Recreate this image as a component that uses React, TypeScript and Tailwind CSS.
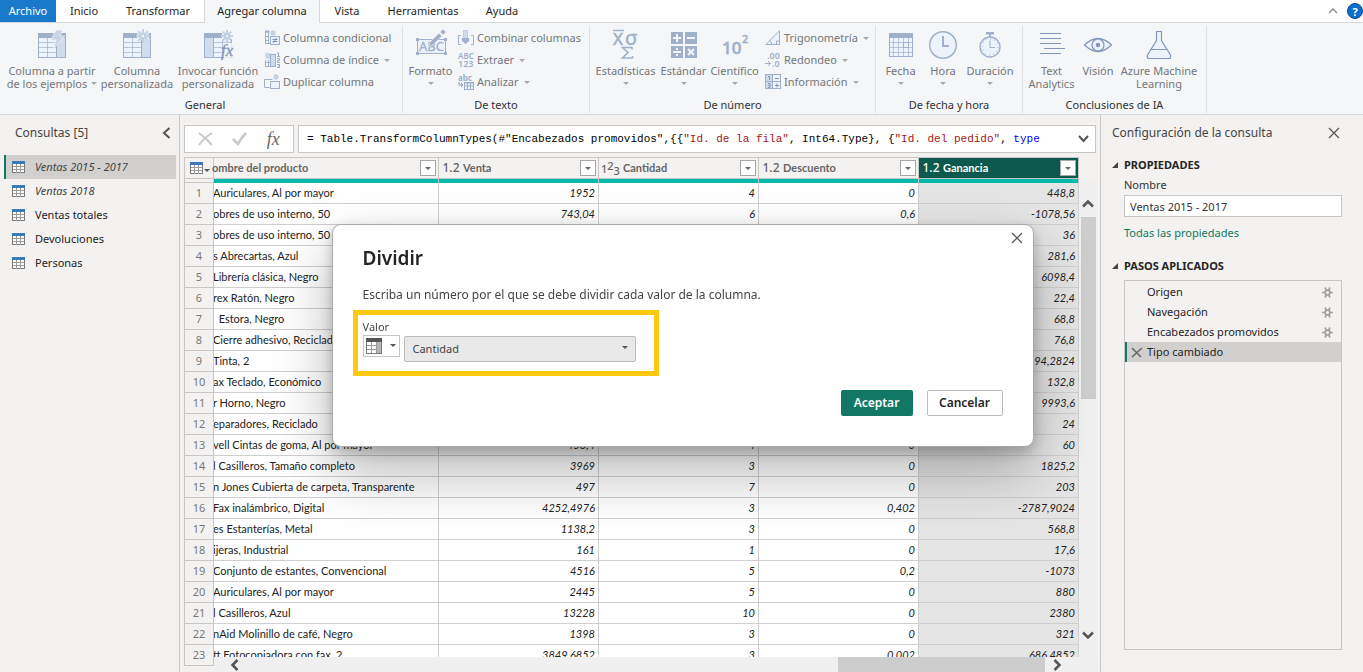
import React from "react";

/* ---------- ribbon icons ---------- */

const LINE = "#a0b0cb";
const DARK = "#8496b8";
const FILL = "#ecf3fd";
const SIDE = "#d0dbec";

function Svg({ w = 32, h = 32, children }: { w?: number; h?: number; children: React.ReactNode }) {
  return (
    <svg width={w} height={h} viewBox={`0 0 ${w} ${h}`} fill="none" className="shrink-0" aria-hidden="true">
      {children}
    </svg>
  );
}

function Spark({ x, y, r, c = "#c3cfe2" }: { x: number; y: number; r: number; c?: string }) {
  const d = Math.round(r * 7) / 10;
  return (
    <g stroke={c} strokeWidth={r > 4 ? 2 : 1.2}>
      <path d={`M${x - r} ${y}H${x + r}M${x} ${y - r}V${y + r}M${x - d} ${y - d}L${x + d} ${y + d}M${x - d} ${y + d}L${x + d} ${y - d}`} />
      <circle cx={x} cy={y} r={r / 3} fill="#f4f6f8" />
    </g>
  );
}

function TableBase({ side }: { side: "left" | "right" }) {
  const sx = side === "right" ? 20.5 : 2.5;
  return (
    <g>
      <rect x="2.5" y="4.5" width="27" height="24" fill={FILL} stroke={LINE} />
      <path d="M2 13.5h28M2 18.5h28M2 23.5h28" stroke={LINE} strokeOpacity=".7" />
      <path d={side === "right" ? "M11.5 9v19" : "M20.5 9v19"} stroke={LINE} strokeOpacity=".7" />
      <rect x={sx} y="8.5" width="9" height="20" fill={SIDE} stroke={LINE} />
      <rect x="2" y="4" width="28" height="5" fill={LINE} />
    </g>
  );
}

const IcoExamples = () => (
  <Svg>
    <TableBase side="right" />
    <path d="M20 1h7l-3 6h5L17 20l3-9h-5z" fill="#c9d4e6" stroke="#f4f6f8" strokeWidth="0.7" />
  </Svg>
);
const IcoCustom = () => (
  <Svg>
    <TableBase side="right" />
    <rect x="16" y="3" width="12" height="8" fill="#f4f6f8" opacity=".7" />
    <Spark x={22} y={7} r={7} />
  </Svg>
);
const IcoInvoke = () => (
  <Svg>
    <TableBase side="left" />
    <rect x="20" y="1" width="12" height="9" fill="#f4f6f8" />
    <rect x="22" y="14" width="10" height="17" fill="#f4f6f8" opacity=".8" />
    <Spark x={25} y={7} r={6} />
    <text x="19" y="27" fontSize="17" fontStyle="italic" fontFamily="Liberation Serif, serif" fill={DARK} stroke={DARK} strokeWidth="0.3">fx</text>
  </Svg>
);
const IcoConditional = () => (
  <Svg w={16} h={16}>
    <path d="M1 2h5M1.5 2v12M1 13.5h5M1 6.5h4M1 10.5h4M4.5 3v10" stroke={LINE} />
    <path d="M1 1.5h4" stroke={LINE} strokeWidth="2" />
    <Spark x={9} y={3} r={3} />
    <rect x="6.5" y="6.5" width="9" height="8" fill={FILL} stroke={LINE} />
    <path d="M8.5 9.5h5M8.5 11.500h5M12.500 8l-3 5" stroke={DARK} />
  </Svg>
);
const IcoIndex = () => (
  <Svg w={16} h={16}>
    <Spark x={4} y={4} r={3.5} />
    <path d="M1.5 8v6.500h6M1 10.500h6M4.500 8v6M7 2.500h5" stroke={LINE} />
    <rect x="6.5" y="2.500" width="5" height="12" fill={SIDE} stroke={LINE} />
    <path d="M13 1h1.500v3M13 4.500h3M13 6.500h2.500v2h-2v2h2.500M13 12.500h2.500v3H13M14 14h1" stroke={DARK} strokeWidth=".8" />
  </Svg>
);
const IcoDuplicate = () => (
  <Svg w={16} h={16}>
    <path d="M5.500 13.500h-5v-8h8" stroke={LINE} />
    <Spark x={12} y={3} r={3} />
    <rect x="6.500" y="7.500" width="9" height="7" fill={FILL} stroke={LINE} />
  </Svg>
);
const IcoFormat = () => (
  <Svg>
    <rect x="2.500" y="10.500" width="28" height="14" fill={FILL} stroke={LINE} />
    <path d="M1 9h3v3H1zM29 9h3v3h-3zM1 23h3v3H1zM29 23h3v3h-3z" fill={LINE} />
    <text x="4" y="22" fontSize="13" fontFamily="Noto Sans, sans-serif" fill={LINE} stroke={LINE} strokeWidth=".3">ABC</text>
    <path d="M28 0l3 3-3 3-3-3zM24 4l3 3-9 9-5 2 2-5z" fill={LINE} stroke="#f4f6f8" strokeWidth="0.6" />
  </Svg>
);
const IcoMerge = () => (
  <Svg w={16} h={16}>
    <rect x="5.500" y="0.500" width="4" height="8" fill={SIDE} stroke={LINE} strokeOpacity=".5" />
    <path d="M4 8h7v3l-3.500 3L4 11z" fill={LINE} />
    <path d="M3 5.500H.500v9H3M13 5.500h2.500v9H13" stroke={LINE} />
  </Svg>
);
const IcoExtract = () => (
  <Svg w={16} h={16}>
    <text x="0" y="7" fontSize="8" fontWeight="600" fontFamily="Noto Sans, sans-serif" fill={LINE}>ABC</text>
    <text x="0" y="15" fontSize="9" fontWeight="600" fontFamily="Noto Sans, sans-serif" fill={LINE}>123</text>
  </Svg>
);
const IcoParse = () => (
  <Svg w={16} h={16}>
    <text x="0" y="7" fontSize="8" fontWeight="700" fontFamily="Noto Sans, sans-serif" fill={LINE}>abc</text>
    <rect x="6.500" y="8.500" width="9" height="7" fill={FILL} stroke={LINE} />
    <path d="M6 9h10M7 12h8M9.500 9v6M12.500 9v6" stroke={LINE} />
    <path d="M1 8v3h4M3 9l2 2-2 2" stroke={DARK} />
  </Svg>
);
const IcoStats = () => (
  <Svg>
    <text x="3" y="16" fontSize="17" fontFamily="Noto Sans, sans-serif" fill={LINE} stroke={LINE} strokeWidth=".5">X</text>
    <text x="15" y="16" fontSize="20" fontFamily="Noto Sans, sans-serif" fill={LINE} stroke={LINE} strokeWidth=".4">σ</text>
    <path d="M3 1.500h11" stroke={LINE} strokeWidth="1.500" />
    <path d="M22 20.500v-2H12.500l5.500 5-5.500 5.500h10v-2" stroke={LINE} strokeWidth="1.600" />
  </Svg>
);
const IcoStandard = () => (
  <Svg>
    <path d="M3 3h12v12H3zM17 3h12v12H17zM3 17h12v12H3zM17 17h12v12H17z" fill={LINE} />
    <path d="M5 9h8M9 5v8M19 9h8M5 23h8M20 20l6 6M26 20l-6 6" stroke="#f4f6f8" strokeWidth="2" />
    <path d="M8 19h2v2H8zM8 25h2v2H8z" fill="#f4f6f8" />
  </Svg>
);
const IcoScientific = () => (
  <Svg>
    <text x="3" y="25" fontSize="17" fontWeight="500" fontFamily="Noto Sans, sans-serif" fill={LINE} stroke={LINE} strokeWidth=".6">10</text>
    <text x="23" y="14" fontSize="11" fontWeight="500" fontFamily="Noto Sans, sans-serif" fill={LINE} stroke={LINE} strokeWidth=".4">2</text>
  </Svg>
);
const IcoTrig = () => (
  <Svg w={16} h={16}>
    <path d="M.800 14.500H14.500V.800z" fill={FILL} stroke={LINE} />
    <path d="M11.500 14v-3h3M5 11q2 1 1.500 3" stroke={LINE} />
  </Svg>
);
const IcoRound = () => (
  <Svg w={16} h={16}>
    <text x="2" y="7" fontSize="9" fontWeight="600" fontFamily="Noto Sans, sans-serif" fill={LINE}>.00</text>
    <text x="7" y="15" fontSize="9" fontWeight="600" fontFamily="Noto Sans, sans-serif" fill={LINE}>.0</text>
    <path d="M0 11.500h5M3 9l2.500 2.500L3 14" stroke={LINE} />
  </Svg>
);
const IcoInfo = () => (
  <Svg w={16} h={16}>
    <rect x=".500" y=".500" width="15" height="14" fill={FILL} stroke={LINE} />
    <rect x="1" y="1" width="6" height="13" fill={SIDE} />
    <path d="M7.500 0v15M1 7.500h15" stroke={LINE} />
    <path d="M3 2.500h1.500V6M3 9.500h2v2H3.500h1.500v2H3M10 4.500h4M10 11.500h4M12 9.500v4" stroke={DARK} />
  </Svg>
);
const IcoDate = () => (
  <Svg>
    <rect x="4.500" y="5.500" width="23" height="22" fill={FILL} stroke={LINE} />
    <path d="M8.500 9v19M13.500 9v19M18.500 9v19M23.500 9v19M4 13.500h24M4 18.500h24M4 23.500h24" stroke={LINE} strokeOpacity=".7" />
    <rect x="18.500" y="13.500" width="5" height="5" stroke={LINE} />
    <path d="M4 4h24v5H4z" fill={LINE} />
  </Svg>
);
const IcoTime = () => (
  <Svg>
    <circle cx="16" cy="16" r="13.300" fill={FILL} stroke={LINE} strokeWidth="1.500" />
    <path d="M16 7v10h6" stroke={LINE} strokeWidth="2" />
  </Svg>
);
const IcoDuration = () => (
  <Svg>
    <path d="M12 3h8v2.500h-8zM15 5h2v4h-2z" fill={LINE} />
    <circle cx="16" cy="18" r="10" fill={FILL} stroke={LINE} strokeWidth="1.400" />
    <circle cx="16" cy="18" r="8" stroke={LINE} strokeDasharray="1 3.190" />
    <path d="M16 11.500v7h5" stroke={LINE} />
  </Svg>
);
const IcoText = () => (
  <Svg>
    <path d="M4 4.500h21M4 9.500h21M4 14.500h21M8 19.500h21M4 24.500h21" stroke={DARK} />
  </Svg>
);
const IcoVision = () => (
  <Svg>
    <path d="M2.500 16Q16 3 29.500 16 16 29 2.500 16z" fill={FILL} stroke={DARK} strokeWidth="1.200" />
    <circle cx="16" cy="16" r="6" fill={FILL} stroke={DARK} strokeWidth="1.200" />
    <circle cx="16" cy="16" r="2.200" fill={DARK} />
  </Svg>
);
const IcoAzure = () => (
  <Svg>
    <path d="M13 2.500h6M13.500 2.500v9L4.500 26q-1 3.500 2 3.500h19q3 0 2-3.500L18.500 11.500v-9" fill={FILL} stroke={DARK} strokeWidth="1.200" />
    <path d="M8 20.500h16" stroke={DARK} />
  </Svg>
);

/* ---------- ribbon ---------- */

function Caret({ className = "border-t-[#a9a9a9]" }: { className?: string }) {
  return <span className={`inline-block h-0 w-0 border-x-[3px] border-t-[3px] border-x-transparent ${className}`} />;
}

function BigButton({ icon, lines, width, caret }: { icon: React.ReactNode; lines: string[]; width: string; caret?: "inline" | "below" }) {
  return (
    <button type="button" className={`flex h-[68px] flex-col items-center pt-[2px] ${width}`}>
      <span className="mb-[3px] flex h-8 items-center">{icon}</span>
      {lines.map((l, i) => (
        <span key={l} className="flex items-center gap-1 whitespace-nowrap text-[11px] leading-[13px]">
          {l}
          {caret === "inline" && i === lines.length - 1 && <Caret />}
        </span>
      ))}
      {caret === "below" && (
        <span className="flex h-[13px] items-center">
          <Caret />
        </span>
      )}
    </button>
  );
}

function SmallButton({ icon, label, caret }: { icon: React.ReactNode; label: string; caret?: boolean }) {
  return (
    <button type="button" className="flex h-[22px] items-center gap-[3px] whitespace-nowrap text-[11px]">
      {icon}
      {label}
      {caret && <span className="ml-0.5 flex"><Caret /></span>}
    </button>
  );
}

function Group({ label, className, children }: { label: string; className: string; children: React.ReactNode }) {
  return (
    <section className={`flex shrink-0 flex-col border-r border-[#e0e1e4] ${className}`} aria-label={label}>
      <div className="flex h-[71px] pt-px">{children}</div>
      <div className="text-center text-[11px] leading-4 text-[#333]">{label}</div>
    </section>
  );
}

function Ribbon() {
  return (
    <div className="flex h-[92px] shrink-0 overflow-hidden border-b border-[#d5d7da] bg-[#f4f6f8] pt-[3px] pb-px text-[#75777a]">
      <Group label="General" className="w-[403px] pl-2">
        <BigButton icon={<IcoExamples />} lines={["Columna a partir", "de los ejemplos"]} width="w-[88px]" caret="inline" />
        <BigButton icon={<IcoCustom />} lines={["Columna", "personalizada"]} width="w-[82px]" />
        <BigButton icon={<IcoInvoke />} lines={["Invocar función", "personalizada"]} width="w-[80px]" />
        <div className="ml-1.5">
          <SmallButton icon={<IcoConditional />} label="Columna condicional" />
          <SmallButton icon={<IcoIndex />} label="Columna de índice" caret />
          <SmallButton icon={<IcoDuplicate />} label="Duplicar columna" />
        </div>
      </Group>
      <Group label="De texto" className="w-[187px]">
        <BigButton icon={<IcoFormat />} lines={["Formato"]} width="w-[55px]" caret="below" />
        <div>
          <SmallButton icon={<IcoMerge />} label="Combinar columnas" />
          <SmallButton icon={<IcoExtract />} label="Extraer" caret />
          <SmallButton icon={<IcoParse />} label="Analizar" caret />
        </div>
      </Group>
      <Group label="De número" className="w-[286px]">
        <BigButton icon={<IcoStats />} lines={["Estadísticas"]} width="w-[71px]" caret="below" />
        <BigButton icon={<IcoStandard />} lines={["Estándar"]} width="w-[45px]" caret="below" />
        <BigButton icon={<IcoScientific />} lines={["Científico"]} width="w-[57px]" caret="below" />
        <div className="ml-0.5">
          <SmallButton icon={<IcoTrig />} label="Trigonometría" caret />
          <SmallButton icon={<IcoRound />} label="Redondeo" caret />
          <SmallButton icon={<IcoInfo />} label="Información" caret />
        </div>
      </Group>
      <Group label="De fecha y hora" className="w-[147px]">
        <BigButton icon={<IcoDate />} lines={["Fecha"]} width="w-[49px]" caret="below" />
        <BigButton icon={<IcoTime />} lines={["Hora"]} width="w-[36px]" caret="below" />
        <BigButton icon={<IcoDuration />} lines={["Duración"]} width="w-[58px]" caret="below" />
      </Group>
      <Group label="Conclusiones de IA" className="w-[184px]">
        <BigButton icon={<IcoText />} lines={["Text", "Analytics"]} width="w-[57px]" />
        <BigButton icon={<IcoVision />} lines={["Visión"]} width="w-[36px]" />
        <BigButton icon={<IcoAzure />} lines={["Azure Machine", "Learning"]} width="w-[86px]" />
      </Group>
    </div>
  );
}

function Tabs() {
  const tab = "flex h-[22px] items-center text-[11px] text-[#262626]";
  return (
    <nav className="flex h-[23px] shrink-0 border-b border-[#d5d7da] bg-white" aria-label="Cinta de opciones">
      <button type="button" className="flex h-[22px] w-14 items-center justify-center bg-[#1979ca] text-[11px] text-white">Archivo</button>
      <button type="button" className={`${tab} w-14 justify-center`}>Inicio</button>
      <button type="button" className={`${tab} w-[92px] justify-center`}>Transformar</button>
      <button type="button" className="flex h-[23px] w-[116px] items-center justify-center border-x border-[#d5d7da] bg-[#f4f6f8] text-[11px] text-[#262626]">Agregar columna</button>
      <button type="button" className={`${tab} w-[54px] justify-center`}>Vista</button>
      <button type="button" className={`${tab} w-[98px] justify-center`}>Herramientas</button>
      <button type="button" className={`${tab} w-[60px] justify-center`}>Ayuda</button>
      <div className="ml-auto flex h-[22px] items-center gap-[9px]">
        <button type="button" aria-label="Contraer la cinta">
          <svg width="10" height="6" viewBox="0 0 10 6" fill="none"><path d="M1 5l4-4 4 4" stroke="#8a8a8a" strokeWidth="1.300" /></svg>
        </button>
        <button type="button" aria-label="Ayuda" className="flex h-4 w-4 items-center justify-center rounded-full border border-[#0b4a8a] bg-[#0a6fd0] text-[11px] leading-none font-bold text-white">?</button>
      </div>
    </nav>
  );
}

/* ---------- queries pane ---------- */

const QUERIES = [
  { name: "Ventas 2015 - 2017", italic: true, active: true },
  { name: "Ventas 2018", italic: true },
  { name: "Ventas totales" },
  { name: "Devoluciones" },
  { name: "Personas" },
];

function SheetIcon() {
  return (
    <svg width="13" height="13" viewBox="0 0 13 13" fill="none" shapeRendering="crispEdges" className="shrink-0" aria-hidden="true">
      <rect x=".5" y=".5" width="12" height="11" fill="#fff" stroke="#7a7a7a" />
      <path d="M1 5.500h11M1 8.500h11M4.500 3v9M8.500 3v9" stroke="#9a9a9a" />
      <path d="M0 0h13v3H0z" fill="#3e78b8" />
    </svg>
  );
}

function QueriesPane() {
  return (
    <aside className="flex w-[180px] shrink-0 flex-col border-r border-[#cbcac9]">
      <header className="flex h-9 items-center justify-between pr-2 pl-[15px]">
        <h2 className="text-[12px] text-[#444]">Consultas [5]</h2>
        <button type="button" aria-label="Contraer panel">
          <svg width="9" height="12" viewBox="0 0 9 12" fill="none"><path d="M7.500 1L2 6l5.500 5" stroke="#555" strokeWidth="2" /></svg>
        </button>
      </header>
      <ul className="mt-1 pr-[3px] pl-1">
        {QUERIES.map((q) => (
          <li key={q.name}>
            <button
              type="button"
              className={`flex h-6 w-full items-center gap-[10px] border-l-2 pl-1.5 text-[11px] ${q.active ? "border-[#117865] bg-[#d2d0ce]" : "border-transparent"} ${q.italic ? "text-[#444] italic" : "text-[#252423]"}`}
            >
              <SheetIcon />
              {q.name}
            </button>
          </li>
        ))}
      </ul>
    </aside>
  );
}

/* ---------- formula bar ---------- */

function FormulaBar() {
  return (
    <div className="flex h-7 shrink-0 gap-[4px] pr-[4px]">
      <div className="flex w-[110px] items-center justify-around border border-[#c8c6c4] bg-white px-1">
        <button type="button" aria-label="Cancelar edición">
          <svg width="16" height="14" viewBox="0 0 16 14" fill="none"><path d="M1 1q7 5 13 12M14 1Q6 6 1 13" stroke="#c8c8c8" strokeWidth="2" /></svg>
        </button>
        <button type="button" aria-label="Confirmar">
          <svg width="16" height="14" viewBox="0 0 16 14" fill="none"><path d="M1 7l5 5Q9 6 14 1" stroke="#c8c8c8" strokeWidth="2.500" /></svg>
        </button>
        <button type="button" aria-label="Insertar paso" className="font-['Liberation_Serif',serif] text-[18px] leading-none text-[#666] italic">fx</button>
      </div>
      <div className="flex min-w-0 flex-1 items-center border border-[#c8c6c4] bg-white pr-1.5 pl-2">
        <code className="min-w-0 flex-1 overflow-hidden font-['Liberation_Mono',monospace] text-[11px] whitespace-pre text-black">
          {'= Table.TransformColumnTypes(#"Encabezados promovidos",{{'}
          <span className="text-[#a31515]">"Id. de la fila"</span>
          {", Int64.Type}, {"}
          <span className="text-[#a31515]">"Id. del pedido"</span>
          {", "}
          <span className="text-[#0000ff]">type</span>
        </code>
        <button type="button" aria-label="Expandir fórmula">
          <svg width="11" height="8" viewBox="0 0 11 8" fill="none"><path d="M1 1l4.500 5L10 1" stroke="#555" strokeWidth="2" /></svg>
        </button>
      </div>
    </div>
  );
}

/* ---------- data grid ---------- */

const COLUMNS = [
  { name: "ombre del producto", type: "", width: "w-[225px]" },
  { name: "Venta", type: "1.2", width: "w-[160px]" },
  { name: "Cantidad", type: "123", width: "w-[160px]" },
  { name: "Descuento", type: "1.2", width: "w-[160px]" },
  { name: "Ganancia", type: "1.2", width: "w-[160px]" },
];

const ROWS: string[][] = [
  ["Auriculares, Al por mayor", "1952", "4", "0", "448,8"],
  ["obres de uso interno, 50", "743,04", "6", "0,6", "-1078,56"],
  ["obres de uso interno, 50", "180", "2", "0", "36"],
  ["s Abrecartas, Azul", "1408", "4", "0", "281,6"],
  ["Librería clásica, Negro", "20328", "7", "0", "6098,4"],
  ["rex Ratón, Negro", "112", "2", "0", "22,4"],
  ["  Estora, Negro", "344", "3", "0", "68,8"],
  ["Cierre adhesivo, Reciclado", "384", "4", "0", "76,8"],
  ["Tinta, 2", "1482,84", "5", "0,4", "-494,2824"],
  ["ax Teclado, Económico", "664", "2", "0", "132,8"],
  ["r Horno, Negro", "33312", "8", "0", "9993,6"],
  ["eparadores, Reciclado", "120", "3", "0", "24"],
  ["vell Cintas de goma, Al por mayor", "458,4", "4", "0", "60"],
  ["l Casilleros, Tamaño completo", "3969", "3", "0", "1825,2"],
  ["n Jones Cubierta de carpeta, Transparente", "497", "7", "0", "203"],
  ["Fax inalámbrico, Digital", "4252,4976", "3", "0,402", "-2787,9024"],
  ["es Estanterías, Metal", "1138,2", "3", "0", "568,8"],
  ["ijeras, Industrial", "161", "1", "0", "17,6"],
  ["Conjunto de estantes, Convencional", "4516", "5", "0,2", "-1073"],
  ["Auriculares, Al por mayor", "2445", "5", "0", "880"],
  ["l Casilleros, Azul", "13228", "10", "0", "2380"],
  ["nAid Molinillo de café, Negro", "1398", "3", "0", "321"],
  ["tt Fotocopiadora con fax, 2", "3849,6852", "3", "0,002", "686,4852"],
];

function TypeMark({ type }: { type: string }) {
  if (type === "123") {
    return (
      <span className="flex w-[20px] items-center text-[11px] leading-none">
        <span>1</span>
        <span className="pb-1.5">2</span>
        <span className="pt-1">3</span>
      </span>
    );
  }
  return <span className="block w-[20px] text-[12px] leading-none">{type}</span>;
}

function ColumnHead({ name, type, selected }: { name: string; type: string; selected: boolean }) {
  return (
    <>
      <div className={`flex h-[22px] items-center border-y border-[#c8c6c4] px-[2px] ${selected ? "bg-[#0b5a4d] text-white" : "bg-[#f3f2f1] text-[#666]"}`}>
        {type ? <span className="mr-[2px] font-['Noto_Sans',sans-serif] font-medium"><TypeMark type={type} /></span> : null}
        <span className={`min-w-0 flex-1 overflow-hidden text-left whitespace-nowrap ${type ? "" : "-ml-1"}`}>{name}</span>
        <button type="button" aria-label={`Filtrar ${name}`} className="flex h-4 w-4 shrink-0 items-center justify-center border border-[#a6a6a6] bg-white">
          <Caret className="border-t-[#666]" />
        </button>
      </div>
      <div className="h-1 bg-[#01b8aa]" />
    </>
  );
}

function Grid() {
  return (
    <div className="relative mt-1 flex min-h-0 flex-1 overflow-hidden">
      <div className="min-w-0 flex-1 overflow-hidden">
        <table className="w-[895px] table-fixed border-separate border-spacing-0 border-l border-[#c8c6c4] font-['Lato','Noto_Sans',sans-serif] text-[11px] leading-[20px] text-[#222]">
          <thead>
            <tr>
              <th className="w-[29px] border-r border-[#c8c6c4] p-0">
                <div className="flex h-[22px] items-center gap-px border-y border-[#c8c6c4] pl-[5px]">
                  <SheetIcon />
                  <Caret className="mt-1 border-t-[#555]" />
                </div>
                <div className="h-1 border-b border-[#c8c6c4]" />
              </th>
              {COLUMNS.map((c, i) => (
                <th key={c.name} scope="col" className={`border-r border-[#c8c6c4] p-0 ${c.width}`}>
                  <ColumnHead name={c.name} type={c.type} selected={i === 4} />
                </th>
              ))}
            </tr>
          </thead>
          <tbody>
            {ROWS.map((r, n) => (
              <tr key={n}>
                <th scope="row" className="h-[21px] border-r border-b border-[#c8c6c4] bg-[#f3f2f1] p-0 text-center font-['Noto_Sans',sans-serif] text-[11px] font-normal text-[#777]">
                  {n + 1}
                </th>
                {r.map((v, i) => (
                  <td
                    key={i}
                    className={`h-[21px] overflow-hidden border-r border-b border-[#cfcfcf] p-0 whitespace-pre ${i === 0 ? "bg-white" : i === 4 ? "bg-[#e5e5e5] pr-[3px] text-right italic" : "bg-white pr-[3px] text-right italic"}`}
                  >
                    {i === 0 ? <span className="-ml-px block">{v}</span> : v}
                  </td>
                ))}
              </tr>
            ))}
          </tbody>
        </table>
      </div>
      <div className="mt-[25px] mr-[4px] flex w-4 shrink-0 flex-col items-center bg-[#f0f0f0]">
        <span className="flex h-[35px] items-center pt-2">
          <svg width="12" height="9" viewBox="0 0 12 9" fill="none"><path d="M1 7.500l5-5 5 5" stroke="#555" strokeWidth="2.500" /></svg>
        </span>
        <span className="h-[182px] w-[15px] bg-[#cdcdcd]" />
        <span className="mt-auto flex h-[41px] items-start">
          <svg width="12" height="9" viewBox="0 0 12 9" fill="none"><path d="M1 1.500l5 5 5-5" stroke="#555" strokeWidth="2.500" /></svg>
        </span>
      </div>
      <div className="absolute right-0 bottom-0 left-[30px] flex h-[15px] items-center bg-[#f0f0f0] pr-[38px] pl-4">
        <svg width="9" height="12" viewBox="0 0 9 12" fill="none"><path d="M7.500 1L2.500 6l5 5" stroke="#555" strokeWidth="2.500" /></svg>
        <span className="ml-auto h-full w-[207px] bg-[#cdcdcd]" />
        <svg className="ml-2" width="9" height="12" viewBox="0 0 9 12" fill="none"><path d="M1.500 1l5 5-5 5" stroke="#555" strokeWidth="2.500" /></svg>
      </div>
    </div>
  );
}

/* ---------- settings pane ---------- */

const STEPS = [
  { name: "Origen", gear: true },
  { name: "Navegación", gear: true },
  { name: "Encabezados promovidos", gear: true },
  { name: "Tipo cambiado", gear: false },
];

function GearIcon() {
  return (
    <svg width="11" height="11" viewBox="0 0 11 11" fill="none" className="shrink-0" aria-hidden="true">
      <path d="M0 5.500h11M3 .500l5 10M8 .500l-5 10" stroke="#a3a3a3" strokeWidth="1.700" />
      <circle cx="5.500" cy="5.500" r="2.400" fill="#f3f2f1" stroke="#a3a3a3" strokeWidth="1.800" />
    </svg>
  );
}

function SectionTitle({ children }: { children: React.ReactNode }) {
  return (
    <h3 className="flex h-5 items-center gap-1.5 text-[11px] font-bold text-[#252423]">
      <svg width="6" height="6" viewBox="0 0 6 6" aria-hidden="true"><path d="M6 0v6H0z" fill="#444" /></svg>
      {children}
    </h3>
  );
}

function SettingsPane() {
  return (
    <aside className="flex w-[263px] shrink-0 flex-col border-l border-[#cbcac9] pl-[11px]">
      <header className="flex h-9 items-center justify-between pr-[23px]">
        <h2 className="text-[12px] text-[#444]">Configuración de la consulta</h2>
        <button type="button" aria-label="Cerrar">
          <svg width="12" height="12" viewBox="0 0 12 12" fill="none"><path d="M1 1l10 10M11 1L1 11" stroke="#555" strokeWidth="1.200" /></svg>
        </button>
      </header>
      <div className="mt-1">
        <SectionTitle>PROPIEDADES</SectionTitle>
      </div>
      <div className="mr-[21px] ml-3 flex flex-col items-start text-[11px]">
        <label htmlFor="query-name" className="flex h-5 items-center text-[#333]">Nombre</label>
        <input id="query-name" defaultValue="Ventas 2015 - 2017" className="h-[22px] w-full border border-[#c8c6c4] bg-white px-[5px] text-[11px] text-[#333]" />
        <a href="#propiedades" className="mt-[5px] flex h-[22px] items-center text-[#117865]">Todas las propiedades</a>
      </div>
      <div className="mt-[12px]">
        <SectionTitle>PASOS APLICADOS</SectionTitle>
      </div>
      <ul className="mt-[4px] mr-[21px] mb-[22px] ml-3 min-h-0 flex-1 border border-[#c8c6c4] pt-px">
        {STEPS.map((s) => (
          <li
            key={s.name}
            className={`flex h-5 items-center border-l-2 pr-2 text-[11px] text-[#252423] ${s.gear ? "border-transparent" : "border-[#117865] bg-[#d2d0ce]"}`}
          >
            <span className="flex w-5 shrink-0 justify-center">
              {!s.gear && (
                <button type="button" aria-label="Eliminar paso">
                  <svg width="12" height="11" viewBox="0 0 12 11" fill="none"><path d="M1 1l9 9M11 1L1 10" stroke="#666" strokeWidth="1.500" /></svg>
                </button>
              )}
            </span>
            <button type="button" className="flex-1 text-left whitespace-nowrap">{s.name}</button>
            {s.gear && <button type="button" aria-label={`Configurar ${s.name}`}><GearIcon /></button>}
          </li>
        ))}
      </ul>
    </aside>
  );
}

/* ---------- dialog ---------- */

function DivideDialog() {
  return (
    <div className="fixed inset-0 flex items-center justify-center pb-0.5 pl-0.5">
      <div
        role="dialog"
        aria-labelledby="divide-title"
        className="flex w-[702px] flex-col rounded-[9px] border border-[#a9a9a9] bg-white pr-[30px] pb-[30px] pl-5 text-[#333] shadow-[0_26px_58px_rgba(0,0,0,0.28),0_5px_14px_rgba(0,0,0,0.22)]"
      >
        <button type="button" aria-label="Cerrar" className="mt-[7px] -mr-5 self-end">
          <svg width="12" height="12" viewBox="0 0 12 12" fill="none"><path d="M1 1l10 10M11 1L1 11" stroke="#555" strokeWidth="1.200" /></svg>
        </button>
        <h1 id="divide-title" className="ml-[10px] text-[19px] leading-7 font-semibold text-[#252423]">Dividir</h1>
        <p className="mt-[14px] ml-[10px] text-[12px] leading-[18px] text-[#444]">Escriba un número por el que se debe dividir cada valor de la columna.</p>
        <div className="mt-[6px] flex h-[66px] w-[306px] flex-col border-[5px] border-[#ffc90e] pt-1 pl-[5px]">
          <label htmlFor="divide-value" className="text-[11px] leading-4 text-[#444]">Valor</label>
          <div className="flex gap-1">
            <button type="button" aria-label="Tipo de valor" className="flex h-[22px] w-[37px] items-center gap-2 border border-[#c8c6c4] bg-white pl-0.5">
              <svg width="16" height="16" viewBox="0 0 16 16" fill="none" shapeRendering="crispEdges" aria-hidden="true">
                <rect x=".5" y=".5" width="15" height="15" fill="#fff" stroke="#777" />
                <path d="M10 4h5v11h-5z" fill="#b5b5b5" />
                <path d="M1 7.500h9M1 11.500h9M5.500 4v11M10.500 4v11" stroke="#999" />
                <path d="M0 0h16v4H0z" fill="#555" />
              </svg>
              <Caret className="border-t-[#555]" />
            </button>
            <div className="relative w-[232px]">
              <select id="divide-value" className="h-[26px] w-full appearance-none rounded-[2px] border border-[#bcbcbc] bg-[#e9e9e9] pl-2 text-[11px] text-[#444]">
                <option>Cantidad</option>
              </select>
              <span className="pointer-events-none absolute top-0 right-2 flex h-[26px] items-center">
                <Caret className="border-t-[#555]" />
              </span>
            </div>
          </div>
        </div>
        <div className="mt-[14px] flex justify-end gap-[14px] text-[12px] font-semibold">
          <button type="button" className="h-[26px] w-[72px] rounded-[2px] bg-[#117865] text-white">Aceptar</button>
          <button type="button" className="h-[26px] w-[76px] rounded-[2px] border border-[#bcbcbc] bg-white text-[#252423]">Cancelar</button>
        </div>
      </div>
    </div>
  );
}

export default function App() {
  return (
    <div className="flex h-screen flex-col overflow-hidden bg-[#f3f2f1] font-['Noto_Sans','Open_Sans',sans-serif]">
      <Tabs />
      <Ribbon />
      <div className="flex min-h-0 flex-1">
        <QueriesPane />
        <main className="flex min-w-0 flex-1 flex-col pt-[10px] pl-1">
          <FormulaBar />
          <Grid />
        </main>
        <SettingsPane />
      </div>
      <DivideDialog />
    </div>
  );
}
